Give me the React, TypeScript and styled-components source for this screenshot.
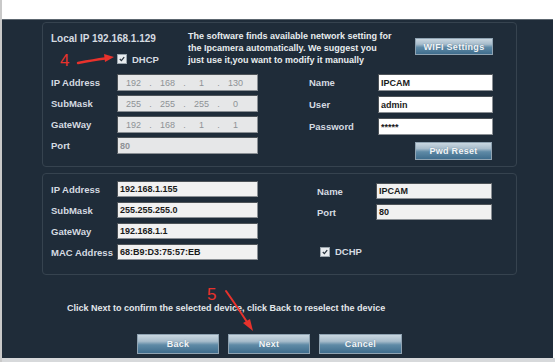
import React, { FC } from "react";
import styled, { createGlobalStyle } from "styled-components";

const GlobalStyle = createGlobalStyle`
  html, body {
    margin: 0;
    padding: 0;
    background: #ffffff;
  }
  body {
    font-family: "Liberation Sans", Arial, sans-serif;
  }
`;

const bg = "#1f2c39";
const label = "#d5dbe1";

const Screen = styled.div`
  width: 555px;
  height: 362px;
  display: flex;
  flex-direction: column;
  background: #ffffff;
  overflow: hidden;
  border-left: 2px solid #c9c9c9;
  box-sizing: border-box;
`;

const TopStrip = styled.div`
  height: 19px;
  background: #ffffff;
`;

const Panel = styled.div`
  position: relative;
  width: 551px;
  height: 339px;
  background: ${bg};
  border-top: 1px solid #5d6770;
  box-sizing: border-box;
  padding: 2px 0 0 40px;
  display: flex;
  flex-direction: column;
`;

const BottomStrip = styled.div`
  flex: 1;
  background: #d7d9db;
`;

const Group = styled.div<{ h: number; top?: number }>`
  width: 475px;
  height: ${(p) => p.h}px;
  margin-top: ${(p) => p.top ?? 0}px;
  box-sizing: border-box;
  border: 1px solid #36434f;
  border-radius: 4px;
  padding-left: 8px;
  display: flex;
  flex-direction: column;
`;

const Header = styled.div`
  display: flex;
  height: 41px;
  margin-top: 10px;
`;

const LocalBlock = styled.div`
  width: 137px;
  display: flex;
  flex-direction: column;
`;

const LocalIp = styled.div`
  font-size: 10px;
  font-weight: bold;
  color: ${label};
  line-height: 12px;
`;

const CheckRow = styled.div<{ indent: number }>`
  display: flex;
  align-items: center;
  gap: 5px;
  margin-left: ${(p) => p.indent}px;
  margin-top: ${(p) => (p.indent > 10 ? 8 : 0)}px;
  height: 12px;
`;

const Box = styled.span`
  width: 8px;
  height: 8px;
  background: #e8ecef;
  border: 1px solid #9aa5ad;
  display: flex;
  align-items: center;
  justify-content: center;
`;

const CheckLabel = styled.span`
  font-size: 9.5px;
  font-weight: bold;
  color: ${label};
`;

const Desc = styled.div`
  width: 222px;
  margin-top: -3px;
  font-size: 9px;
  font-weight: bold;
  line-height: 12px;
  color: #e8ecef;
  white-space: nowrap;
`;

const Btn = styled.div<{ w: number; h: number }>`
  width: ${(p) => p.w}px;
  height: ${(p) => p.h}px;
  box-sizing: border-box;
  border: 1px solid #8fa3b2;
  background: linear-gradient(
    to bottom,
    #c9d7e1 0%,
    #a7bccb 35%,
    #5f8aa6 55%,
    #3f6d8d 100%
  );
  color: #f2f5f8;
  font-size: 9px;
  font-weight: bold;
  display: flex;
  align-items: center;
  justify-content: center;
  letter-spacing: 0.3px;
  text-shadow: 0 0 1px #5a7a90;
`;

const WifiBtn = styled(Btn)`
  margin-left: 5px;
  margin-top: 5px;
`;

const Body = styled.div`
  display: flex;
`;

const Fields = styled.div<{ gap: number; top?: number; left?: number }>`
  display: flex;
  flex-direction: column;
  gap: ${(p) => p.gap}px;
  margin-top: ${(p) => p.top ?? 0}px;
  margin-left: ${(p) => p.left ?? 0}px;
`;

const Row = styled.div<{ h: number; top?: number }>`
  display: flex;
  align-items: center;
  height: ${(p) => p.h}px;
  margin-top: ${(p) => p.top ?? 0}px;
`;

const Label = styled.div<{ w: number }>`
  width: ${(p) => p.w}px;
  font-size: 9.5px;
  font-weight: bold;
  color: ${label};
  white-space: nowrap;
`;

type Tone = "dim" | "white" | "soft";

const Input = styled.div<{ w: number; tone: Tone }>`
  width: ${(p) => p.w}px;
  height: 100%;
  box-sizing: border-box;
  border: 1px solid #8a8f94;
  border-top-color: #4d5358;
  border-left-color: #4d5358;
  background: ${(p) =>
    p.tone === "dim" ? "#e6e7e8" : p.tone === "white" ? "#ffffff" : "#f1f1f1"};
  color: ${(p) => (p.tone === "dim" ? "#8e9296" : "#1a1a1a")};
  font-size: 9px;
  font-weight: bold;
  padding-left: 2px;
  display: flex;
  align-items: center;
  white-space: nowrap;
`;

const Segment = styled.span`
  width: 27px;
  text-align: center;
  font-weight: normal;
`;

const Dot = styled.span`
  width: 7px;
  text-align: center;
  font-weight: normal;
`;

const ResetRow = styled.div`
  display: flex;
  justify-content: flex-end;
  margin-top: 2px;
  padding-right: 1px;
`;

const Footer = styled.div`
  display: flex;
  flex-direction: column;
  margin-left: 25px;
`;

const Hint = styled.div`
  margin-top: 27px;
  font-size: 9px;
  font-weight: bold;
  line-height: 12px;
  color: #e3e7eb;
`;

const Buttons = styled.div`
  display: flex;
  gap: 9px;
  margin-top: 20px;
  margin-left: 70px;
`;

const Mark = styled.div<{ x: number; y: number }>`
  position: absolute;
  left: ${(p) => p.x}px;
  top: ${(p) => p.y}px;
  font-family: "Liberation Sans", Arial, sans-serif;
  font-size: 17px;
  color: #e8322c;
  line-height: 1;
`;

const Arrow = styled.svg`
  position: absolute;
  left: 0;
  top: 0;
  pointer-events: none;
`;

const Check: FC<{ text: string; indent: number }> = ({ text, indent }) => (
  <CheckRow indent={indent}>
    <Box>
      <svg width="6" height="6" viewBox="0 0 6 6">
        <path d="M0.8 3 L2.4 4.6 L5.2 1.2" stroke="#2a3640" strokeWidth="1.3" fill="none" />
      </svg>
    </Box>
    <CheckLabel>{text}</CheckLabel>
  </CheckRow>
);

const IpInput: FC<{ parts: string[] }> = ({ parts }) => (
  <Input w={141} tone="dim">
    {parts.map((p, i) => (
      <React.Fragment key={i}>
        {i > 0 && <Dot>.</Dot>}
        <Segment>{p}</Segment>
      </React.Fragment>
    ))}
  </Input>
);

export default function App() {
  return (
    <>
      <GlobalStyle />
      <Screen>
        <TopStrip />
        <Panel>
          <Group h={145}>
            <Header>
              <LocalBlock>
                <LocalIp>Local IP 192.168.1.129</LocalIp>
                <Check text="DHCP" indent={66} />
              </LocalBlock>
              <Desc>
                The software finds available network setting for
                <br />
                the Ipcamera automatically. We suggest you
                <br />
                just use it,you want to modify it manually
              </Desc>
              <WifiBtn w={78} h={17}>WIFI Settings</WifiBtn>
            </Header>
            <Body>
              <Fields gap={4}>
                <Row h={17}>
                  <Label w={66}>IP Address</Label>
                  <IpInput parts={["192", "168", "1", "130"]} />
                </Row>
                <Row h={17}>
                  <Label w={66}>SubMask</Label>
                  <IpInput parts={["255", "255", "255", "0"]} />
                </Row>
                <Row h={17}>
                  <Label w={66}>GateWay</Label>
                  <IpInput parts={["192", "168", "1", "1"]} />
                </Row>
                <Row h={17}>
                  <Label w={66}>Port</Label>
                  <Input w={141} tone="dim">80</Input>
                </Row>
              </Fields>
              <Fields gap={5} left={51}>
                <Row h={17}>
                  <Label w={69}>Name</Label>
                  <Input w={115} tone="white">IPCAM</Input>
                </Row>
                <Row h={17}>
                  <Label w={69}>User</Label>
                  <Input w={115} tone="white">admin</Input>
                </Row>
                <Row h={17}>
                  <Label w={69}>Password</Label>
                  <Input w={115} tone="white">*****</Input>
                </Row>
                <ResetRow>
                  <Btn w={77} h={18}>Pwd Reset</Btn>
                </ResetRow>
              </Fields>
            </Body>
          </Group>

          <Group h={102} top={6}>
            <Body>
              <Fields gap={5} top={7}>
                <Row h={16}>
                  <Label w={66}>IP Address</Label>
                  <Input w={141} tone="soft">192.168.1.155</Input>
                </Row>
                <Row h={16}>
                  <Label w={66}>SubMask</Label>
                  <Input w={141} tone="soft">255.255.255.0</Input>
                </Row>
                <Row h={16}>
                  <Label w={66}>GateWay</Label>
                  <Input w={141} tone="soft">192.168.1.1</Input>
                </Row>
                <Row h={16}>
                  <Label w={66}>MAC Address</Label>
                  <Input w={141} tone="soft">68:B9:D3:75:57:EB</Input>
                </Row>
              </Fields>
              <Fields gap={5} top={9} left={59}>
                <Row h={16}>
                  <Label w={59}>Name</Label>
                  <Input w={116} tone="soft">IPCAM</Input>
                </Row>
                <Row h={16}>
                  <Label w={59}>Port</Label>
                  <Input w={116} tone="soft">80</Input>
                </Row>
                <Row h={13} top={20}>
                  <Check text="DCHP" indent={3} />
                </Row>
              </Fields>
            </Body>
          </Group>

          <Footer>
            <Hint>
              Click Next to confirm the selected device, click Back to reselect
              the device
            </Hint>
            <Buttons>
              <Btn w={82} h={20}>Back</Btn>
              <Btn w={82} h={20}>Next</Btn>
              <Btn w={83} h={20}>Cancel</Btn>
            </Buttons>
          </Footer>

          <Mark x={58} y={32}>4</Mark>
          <Mark x={205} y={266}>5</Mark>
          <Arrow width="551" height="339" viewBox="0 0 551 339">
            <path d="M76 43 Q92 40 103 38.5" stroke="#e8322c" strokeWidth="2.4" fill="none" strokeLinecap="round" />
            <path d="M112 37 L102 34 L103 42 Z" fill="#e8322c" />
            <path d="M224 271 Q236 288 245 302" stroke="#e8322c" strokeWidth="2" fill="none" strokeLinecap="round" />
            <path d="M251 311 L241 303 L248 299 Z" fill="#e8322c" />
          </Arrow>
        </Panel>
        <BottomStrip />
      </Screen>
    </>
  );
}
